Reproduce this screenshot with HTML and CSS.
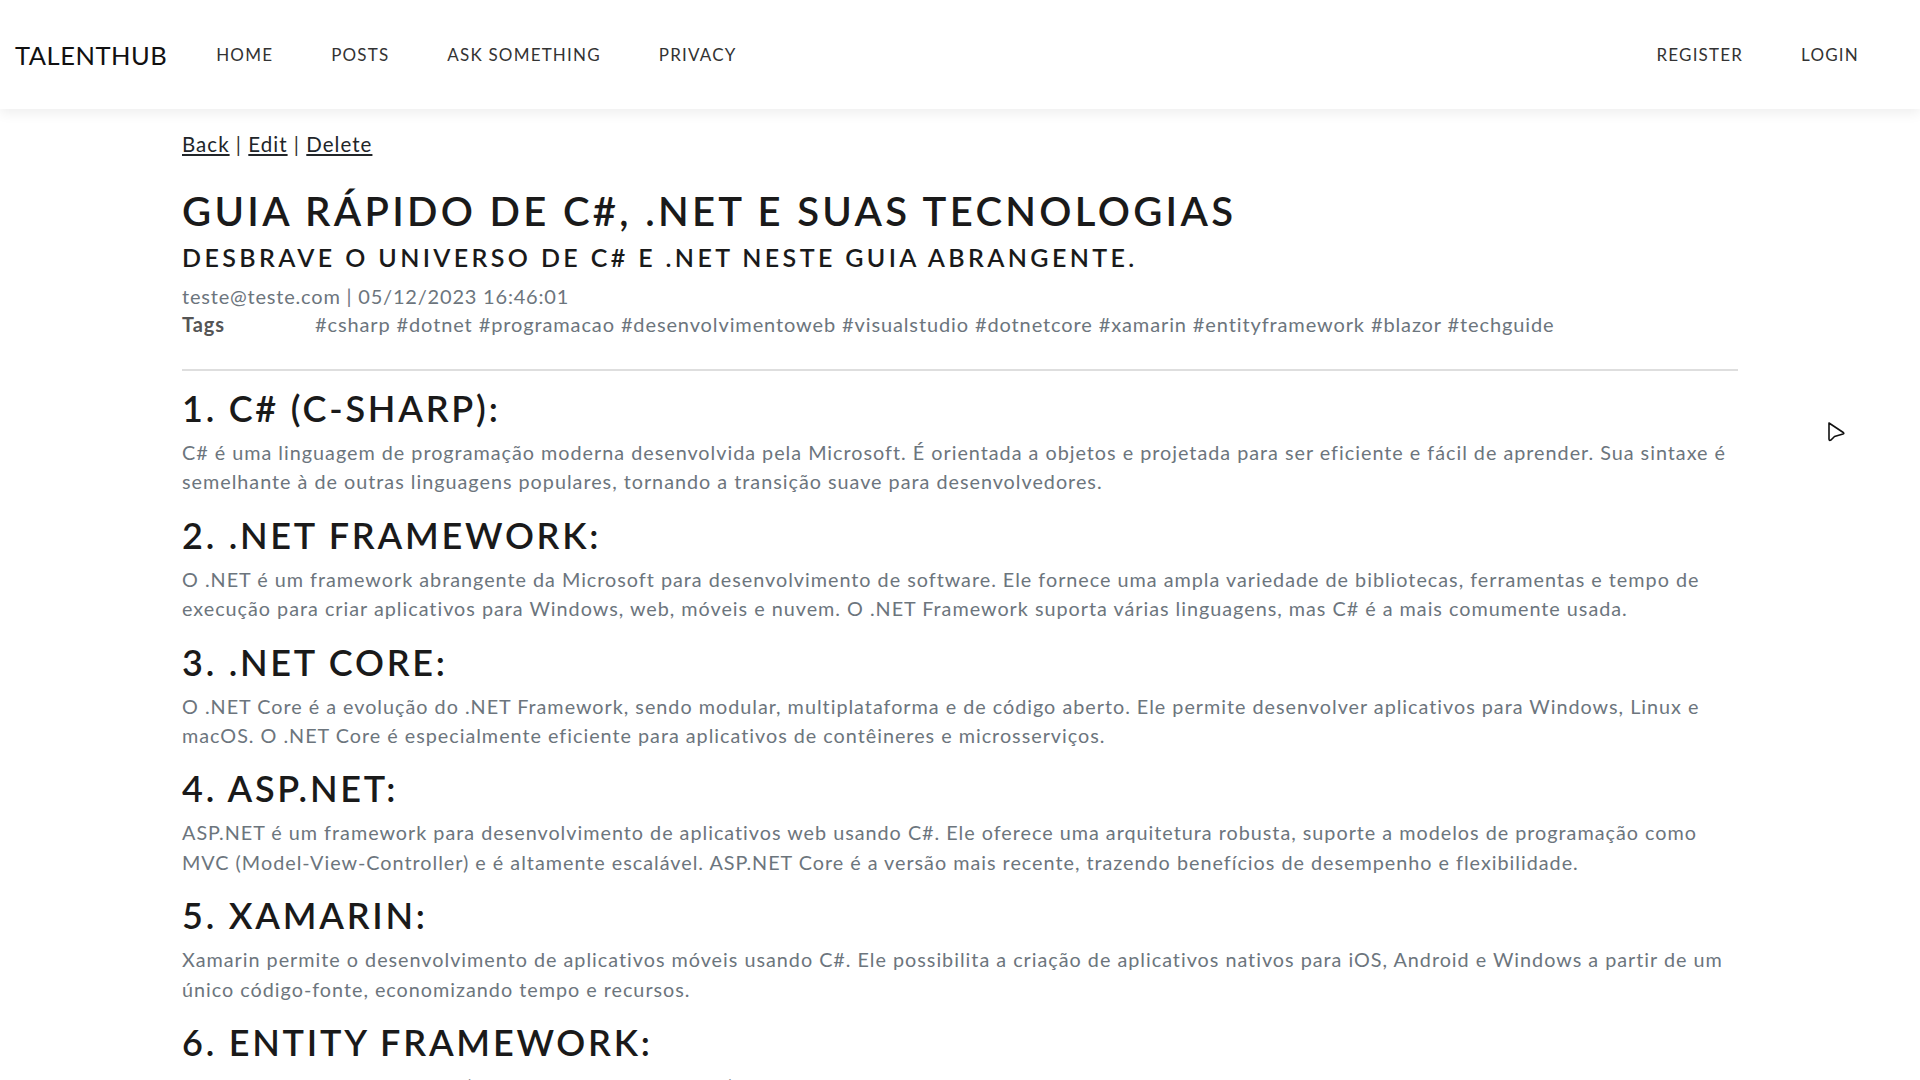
FILE: index.html
```html
<!DOCTYPE html>
<html lang="pt-BR">
<head>
<meta charset="utf-8">
<title>TalentHub</title>
<link rel="stylesheet" href="styles.css">
</head>
<body>
<header class="navbar">
  <a class="brand" href="#">TALENTHUB</a>
  <nav class="nav-main">
    <a href="#">Home</a>
    <a href="#">Posts</a>
    <a href="#">Ask Something</a>
    <a href="#">Privacy</a>
  </nav>
  <nav class="nav-user">
    <a href="#">Register</a>
    <a href="#">Login</a>
  </nav>
</header>

<main class="container">
  <div class="actions"><a href="#">Back</a> | <a href="#">Edit</a> | <a href="#">Delete</a></div>

  <h1 class="title">Guia Rápido de C#, .NET e Suas Tecnologias</h1>
  <h2 class="subtitle">Desbrave o Universo de C# e .NET neste Guia Abrangente.</h2>
  <div class="meta">teste@teste.com | 05/12/2023 16:46:01</div>
  <dl class="tags">
    <dt>Tags</dt>
    <dd>#csharp #dotnet #programacao #desenvolvimentoweb #visualstudio #dotnetcore #xamarin #entityframework #blazor #techguide</dd>
  </dl>
  <hr class="divider">

  <article class="content">
    <h3>1. C# (C-Sharp):</h3>
    <p>C# é uma linguagem de programação moderna desenvolvida pela Microsoft. É orientada a objetos e projetada para ser eficiente e fácil de aprender. Sua sintaxe é semelhante à de outras linguagens populares, tornando a transição suave para desenvolvedores.</p>
    <h3>2. .NET Framework:</h3>
    <p>O .NET é um framework abrangente da Microsoft para desenvolvimento de software. Ele fornece uma ampla variedade de bibliotecas, ferramentas e tempo de execução para criar aplicativos para Windows, web, móveis e nuvem. O .NET Framework suporta várias linguagens, mas C# é a mais comumente usada.</p>
    <h3>3. .NET Core:</h3>
    <p>O .NET Core é a evolução do .NET Framework, sendo modular, multiplataforma e de código aberto. Ele permite desenvolver aplicativos para Windows, Linux e macOS. O .NET Core é especialmente eficiente para aplicativos de contêineres e microsserviços.</p>
    <h3>4. ASP.NET:</h3>
    <p>ASP.NET é um framework para desenvolvimento de aplicativos web usando C#. Ele oferece uma arquitetura robusta, suporte a modelos de programação como MVC (Model-View-Controller) e é altamente escalável. ASP.NET Core é a versão mais recente, trazendo benefícios de desempenho e flexibilidade.</p>
    <h3>5. Xamarin:</h3>
    <p>Xamarin permite o desenvolvimento de aplicativos móveis usando C#. Ele possibilita a criação de aplicativos nativos para iOS, Android e Windows a partir de um único código-fonte, economizando tempo e recursos.</p>
    <h3>6. Entity Framework:</h3>
    <p>Entity Framework é um ORM (Object-Relational Mapping) que simplifica o acesso a bancos de dados em aplicativos .NET. Ele permite que os desenvolvedores trabalhem com dados usando objetos e consultas LINQ, reduzindo o código repetitivo.</p>
  </article>
</main>

<svg class="cursor" width="19" height="23" viewBox="0 0 19 23" aria-hidden="true">
  <path d="M2 2 L2 18 Q2 20 4 19 L7.5 15.5 L16 13 Q17.5 12.5 16.3 11.5 Z" fill="#fff" stroke="#111" stroke-width="1.6" stroke-linejoin="round"/>
</svg>
</body>
</html>
```

FILE: styles.css
```css
* { box-sizing: border-box; }

html, body {
  margin: 0;
  padding: 0;
  background: #fff;
}

body {
  font-family: "Lato", "Open Sans", sans-serif;
  color: #212529;
}

a { color: inherit; }

.navbar {
  height: 109px;
  display: flex;
  align-items: center;
  padding: 0 32px 0 15px;
  background: #fff;
  box-shadow: 0 4px 12px rgba(0, 0, 0, 0.07);
}

.brand {
  font-size: 25.5px;
  letter-spacing: 0.02em;
  color: #111;
  text-decoration: none;
  margin-right: 20px;
}

.nav-main, .nav-user {
  display: flex;
}

.nav-user { margin-left: auto; }

.nav-main a, .nav-user a {
  padding: 0 29px;
  font-size: 17px;
  text-transform: uppercase;
  letter-spacing: 0.07em;
  color: #333;
  text-decoration: none;
}

.container {
  padding: 0 182px;
}

.actions {
  margin-top: 21px;
  font-size: 20.5px;
  line-height: 28px;
  letter-spacing: 0.05em;
  color: #333;
}

.actions a { color: #212529; }

.title {
  margin: 29px 0 0;
  font-size: 40px;
  font-weight: 600;
  line-height: 48px;
  letter-spacing: 0.083em;
  text-transform: uppercase;
  color: #1a1a1a;
}

.subtitle {
  margin: 5px 0 0;
  font-size: 25px;
  font-weight: 600;
  line-height: 34px;
  letter-spacing: 0.135em;
  text-transform: uppercase;
  color: #1a1a1a;
}

.meta {
  margin-top: 8px;
  font-size: 20px;
  line-height: 28px;
  letter-spacing: 0.04em;
  color: #6c757d;
}

.tags {
  display: flex;
  margin: 0 0 30px;
  font-size: 20px;
  line-height: 29px;
  letter-spacing: 0.044em;
}

.tags dt {
  width: 133px;
  font-weight: 700;
  color: #555;
}

.tags dd {
  margin: 0;
  color: #6c757d;
}

.divider {
  margin: 15px 0 16px;
  border: 0;
  border-top: 2px solid #dedede;
}

.content h3 {
  margin: 0 0 8px;
  font-size: 36px;
  font-weight: 600;
  line-height: 43px;
  letter-spacing: 0.077em;
  text-transform: uppercase;
  color: #1a1a1a;
}

.content p {
  margin: 0 0 17px;
  font-size: 19.8px;
  line-height: 29.4px;
  letter-spacing: 0.05em;
  color: #6c757d;
}

.cursor {
  position: absolute;
  left: 1827px;
  top: 421px;
}
```
